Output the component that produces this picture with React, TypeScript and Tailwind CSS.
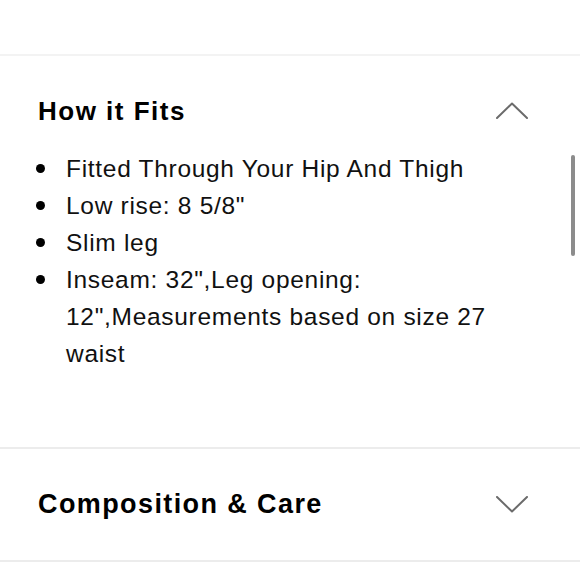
const fitItems = [
  'Fitted Through Your Hip And Thigh',
  'Low rise: 8 5/8"',
  'Slim leg',
  'Inseam: 32",Leg opening: 12",Measurements based on size 27 waist',
]

function Chevron({ up }: { up?: boolean }) {
  return (
    <svg width="32" height="17" viewBox="0 0 32 17" fill="none">
      <polyline
        points={up ? '1,16 16,1.5 31,16' : '1,1 16,15.5 31,1'}
        stroke="#6b6b6b"
        strokeWidth="2"
        strokeLinecap="round"
        strokeLinejoin="round"
      />
    </svg>
  )
}

export default function App() {
  return (
    <div className="relative w-[580px] h-[580px] overflow-hidden bg-white font-['Liberation_Sans',Arial,sans-serif] text-black">
      <div className="h-[54px]" />
      <div className="h-[2px] bg-[#f3f3f3]" />

      <div className="mt-[36px] h-[37px] flex items-center justify-between pl-[38px] pr-[52px]">
        <h2 className="text-[26px] font-bold tracking-[1.5px] leading-none">How it Fits</h2>
        <Chevron up />
      </div>

      <ul className="mt-[21px] pl-[36px] text-[24.5px] leading-[37px] tracking-[0.7px] text-[#111]">
        {fitItems.map((item) => (
          <li key={item} className="flex">
            <span className="w-[30px] shrink-0 flex h-[37px] items-center">
              <span className="w-[9px] h-[9px] rounded-full bg-black" />
            </span>
            <span className="w-[425px]">{item}</span>
          </li>
        ))}
      </ul>

      <div className="mt-[75px] h-[2px] bg-[#ececec]" />

      <div className="mt-[37px] h-[37px] flex items-center justify-between pl-[38px] pr-[52px]">
        <h2 className="text-[27px] font-bold tracking-[1.4px] leading-none">Composition &amp; Care</h2>
        <Chevron />
      </div>

      <div className="mt-[37px] h-[2px] bg-[#ececec]" />

      <div className="absolute left-[571px] top-[155px] w-[4px] h-[101px] rounded-full bg-[#8c8c8c]" />
    </div>
  )
}
